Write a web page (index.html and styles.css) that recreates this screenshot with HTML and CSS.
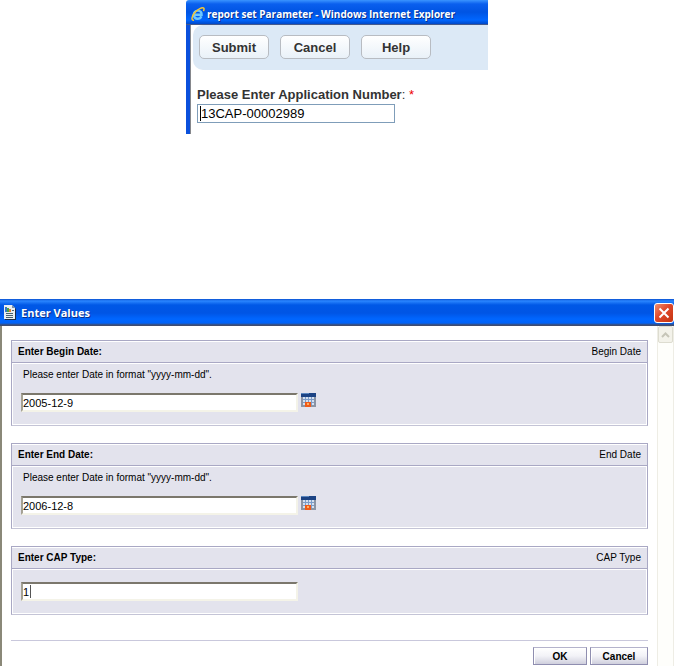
FILE: index.html
```html
<!DOCTYPE html>
<html lang="en">
<head>
	<title>Report Parameters</title>
	<meta charset="utf-8">
	<link rel="stylesheet" href="styles.css">
</head>
<body>
<form class="report">
	<div class="report-title">
		<svg viewBox="0 0 14 14" width="14" height="14" aria-hidden="true">
			<path d="M10.4 9.2C9.6 11 8.3 11.8 6.6 11.8C4.3 11.8 2.8 10 2.8 7.8C2.8 5.4 4.5 3.6 6.9 3.6C9.3 3.6 10.8 5.3 10.6 7.8H3.5" fill="none" stroke="#6cc8ff" stroke-width="2.4"/>
			<path d="M3 13.2C0 13.4 .6 9.6 3.4 6C6.6 2 11.6 -.2 12.8 1.2C13.3 1.9 13 3 12.4 4.2" fill="none" stroke="#f4c534" stroke-width="1.5"/>
		</svg>
		<span>report set Parameter - Windows Internet Explorer</span>
	</div>
	<div class="report-body">
		<div class="toolbar">
			<button type="button">Submit</button>
			<button type="button">Cancel</button>
			<button type="button">Help</button>
		</div>
		<div class="app-number">
			<label for="app_number">Please Enter Application Number<span class="colon">:</span> <span class="red">*</span></label>
			<input id="app_number" class="caret-start" type="text" value="13CAP-00002989">
		</div>
	</div>
</form>

<form class="values">
	<div class="values-title">
		<svg viewBox="0 0 12 15" width="12" height="15" aria-hidden="true">
			<path d="M1 1H9L12 4V15H1Z" fill="#1c2c44"/>
			<path d="M0 0H8L11 3V14H0Z" fill="#e8eef0"/>
			<path d="M8 0V3H11Z" fill="#7890a8"/>
			<path d="M1 2H3V7H1Z" fill="#3a78c4"/>
			<path d="M3 3H5V7H3Z" fill="#48a048"/>
			<path d="M5 4H7V7H5Z" fill="#e08030"/>
			<path d="M2 8.5H9M2 10.5H9M2 12.5H9" stroke="#48606c"/>
			<path d="M8 5.5H10" stroke="#48606c"/>
		</svg>
		<span>Enter Values</span>
		<button type="button" class="close" aria-label="Close">
			<svg viewBox="0 0 12 12" width="12" height="12" aria-hidden="true"><path d="M1.5 1.5L10.5 10.5M10.5 1.5L1.5 10.5" stroke="#fff" stroke-width="2"/></svg>
		</button>
	</div>
	<div class="values-main">
		<div class="values-content">
			<section class="param">
				<div class="param-head"><label for="begin_date">Enter Begin Date:</label><span>Begin Date</span></div>
				<div class="param-body">
					<p>Please enter Date in format "yyyy-mm-dd".</p>
					<div class="field">
						<input id="begin_date" type="text" value="2005-12-9">
						<button type="button" class="calendar" aria-label="Pick begin date">
							<svg viewBox="0 0 15 14" width="15" height="14" aria-hidden="true">
								<path d="M0 0H15V14H0Z" fill="#8b94a4"/>
								<path d="M0 0H15V4H0Z" fill="#1c4384"/>
								<path d="M0 0H8V1H0Z" fill="#5c88c0"/>
								<path d="M2 4H13V12H2Z" fill="#d4e0f0"/>
								<path d="M2 6.5H13M2 9.5H13M4.5 4V12M7.5 4V12M10.5 4V12" stroke="#7d9cc8"/>
								<path d="M4 9H10V14H4Z" fill="#f05a18"/>
								<path d="M6 10H8V12H6Z" fill="#ffb060"/>
							</svg>
						</button>
					</div>
				</div>
			</section>
			<section class="param">
				<div class="param-head"><label for="end_date">Enter End Date:</label><span>End Date</span></div>
				<div class="param-body">
					<p>Please enter Date in format "yyyy-mm-dd".</p>
					<div class="field">
						<input id="end_date" type="text" value="2006-12-8">
						<button type="button" class="calendar" aria-label="Pick end date">
							<svg viewBox="0 0 15 14" width="15" height="14" aria-hidden="true">
								<path d="M0 0H15V14H0Z" fill="#8b94a4"/>
								<path d="M0 0H15V4H0Z" fill="#1c4384"/>
								<path d="M0 0H8V1H0Z" fill="#5c88c0"/>
								<path d="M2 4H13V12H2Z" fill="#d4e0f0"/>
								<path d="M2 6.5H13M2 9.5H13M4.5 4V12M7.5 4V12M10.5 4V12" stroke="#7d9cc8"/>
								<path d="M4 9H10V14H4Z" fill="#f05a18"/>
								<path d="M6 10H8V12H6Z" fill="#ffb060"/>
							</svg>
						</button>
					</div>
				</div>
			</section>
			<section class="param">
				<div class="param-head"><label for="cap_type">Enter CAP Type:</label><span>CAP Type</span></div>
				<div class="param-body short">
					<div class="field">
						<input id="cap_type" class="caret-end" type="text" value="1">
					</div>
				</div>
			</section>
			<div class="actions">
				<button type="button" class="ok">OK</button>
				<button type="button">Cancel</button>
			</div>
		</div>
		<div class="scroll">
			<button type="button" aria-label="Scroll up">
				<svg viewBox="0 0 9 6" width="9" height="6" aria-hidden="true"><path d="M1 5L4.5 1.5L8 5" fill="none" stroke="#c6c5b8" stroke-width="2"/></svg>
			</button>
		</div>
	</div>
</form>
</body>
</html>
```

FILE: styles.css
```css
* {
	box-sizing: border-box;
}

body {
	margin: 0;
	background: #fff;
	color: #000;
	font-family: "Liberation Sans", Arial, sans-serif;
	font-size: 10px;
}

button,
input {
	margin: 0;
	padding: 0;
	font-family: inherit;
	color: inherit;
}

button {
	display: flex;
	align-items: center;
	justify-content: center;
}

svg {
	flex-shrink: 0;
}

/* report window */
.report {
	max-width: 302px;
	margin: 0 auto 165px;
}

.report-title {
	display: flex;
	align-items: center;
	gap: 2px;
	height: 25px;
	padding: 2px 4px 0 5px;
	border-top-left-radius: 3px;
	background: linear-gradient(#3a94ff 0, #0a5fee 4px, #0054e3 12px, #0066ff 20px, #0048c8 24px, #44598c 24px);
	color: #fff;
	font-family: "Open Sans", "Noto Sans", sans-serif;
	font-weight: bold;
	text-shadow: 1px 1px #0a2f88;
	white-space: nowrap;
}

.report-body {
	padding: 0 0 11px 3px;
	border-left: 4px solid #0a50dc;
	box-shadow: inset 1px 0 #85878c;
}

.toolbar {
	display: flex;
	gap: 11px;
	padding: 10px 6px 11px;
	background: #dce9f6;
	border-radius: 10px 0 0 10px;
}

.toolbar button {
	width: 70px;
	height: 24px;
	border: 1px solid #b8bcc2;
	border-radius: 5px;
	background: linear-gradient(#fff, #e9f1f8);
	color: #333;
	font-size: 13px;
	font-weight: bold;
}

.app-number {
	padding: 16px 4px 0;
}

.app-number label {
	display: block;
	height: 18px;
	line-height: 18px;
	color: #333;
	font-size: 13px;
	font-weight: bold;
	white-space: nowrap;
}

.app-number .colon,
.app-number .red {
	font-weight: normal;
}

.app-number .red {
	color: #e00;
}

.app-number input {
	display: block;
	width: 198px;
	height: 19px;
	padding: 0 3px;
	border: 1px solid #7f9db9;
	background: #fff;
	font-size: 13px;
}

.app-number .caret-start {
	background: linear-gradient(#000, #000) 2px 1px / 1px 15px no-repeat #fff;
}

/* values window */
.values-title {
	display: flex;
	align-items: center;
	gap: 5px;
	height: 27px;
	padding: 0 0 0 4px;
	background: linear-gradient(#0a50d0 0, #2a86ff 2px, #0058e6 6px, #0055e5 14px, #0066ff 20px, #0062f8 24px, #404c70 26px);
	color: #fff;
	font-family: "Open Sans", "Noto Sans", sans-serif;
	font-size: 11px;
	font-weight: bold;
	text-shadow: 1px 1px #0a2f88;
}

.close {
	width: 20px;
	height: 20px;
	margin-left: auto;
	border: 1px solid #fff;
	border-radius: 3px;
	background: linear-gradient(135deg, #f09070, #e0482a 45%, #c43410);
}

.values-main {
	display: flex;
	min-height: 340px;
	border-left: 2px solid #8a8878;
}

.values-content {
	flex: 1;
	padding: 14px 9px 0;
}

.param {
	margin-bottom: 17px;
	border: 1px solid #a9a8c4;
	border-bottom-color: #c4c4d6;
	background: #e3e3ed;
}

.param-head {
	display: flex;
	align-items: center;
	justify-content: space-between;
	height: 22px;
	padding: 0 6px;
	border-bottom: 1px solid #a9a8c4;
	box-shadow: inset 0 1px #fff;
}

.param-head label {
	font-weight: bold;
}

.param-body {
	height: 62px;
	padding: 6px 9px;
	box-shadow: inset 0 0 0 1px #fff;
}

.param-body.short {
	height: 45px;
	padding-top: 13px;
}

.param-body p {
	height: 12px;
	margin: 0 2px 12px;
	line-height: 12px;
}

.field {
	display: flex;
	gap: 3px;
}

.field input {
	width: 277px;
	height: 19px;
	border: 2px solid #f4f3e8;
	border-top-color: #7b776c;
	border-left-color: #a5a294;
	background: #fff;
	font-size: 11px;
}

.field .caret-end {
	background: linear-gradient(#555, #555) 7px 1px / 1px 13px no-repeat #fff;
}

.calendar {
	width: 15px;
	height: 14px;
	border: 0;
	background: none;
}

.actions {
	display: flex;
	justify-content: flex-end;
	gap: 3px;
	margin-top: 25px;
	padding-top: 6px;
	border-top: 1px solid #c9c8dc;
}

.actions button {
	width: 58px;
	height: 18px;
	border: 1px solid #8f8eb0;
	border-top-color: #b4b3cc;
	background: linear-gradient(#fff, #f2f2f7 50%, #cfcfdd);
	box-shadow: inset 1px 1px #fff;
	font-size: 10px;
	font-weight: bold;
}

.actions .ok {
	width: 54px;
}

.scroll {
	width: 17px;
	border: 1px solid #eeede5;
	border-width: 0 1px;
	background: #fefefb;
}

.scroll button {
	width: 15px;
	height: 17px;
	border: 1px solid #dddcd0;
	border-radius: 2px;
	background: #f3f2ea;
}
```
